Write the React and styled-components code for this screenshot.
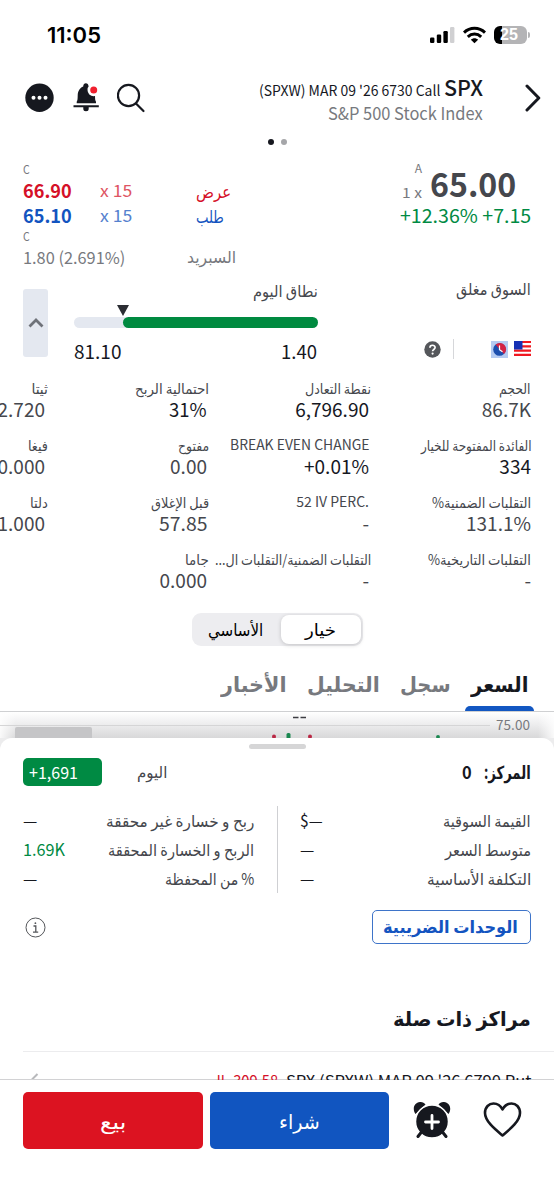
import React, { useLayoutEffect, useRef, useState } from 'react';
import styled, { createGlobalStyle } from 'styled-components';

const GlobalStyle = createGlobalStyle`
  * { box-sizing: border-box; }
  body { margin: 0; background: #fff; }
`;

const Screen = styled.div`
  width: 554px;
  height: 1200px;
  overflow: hidden;
  display: flex;
  flex-direction: column;
  background: #fff;
  color: #16181f;
  font-family: 'Noto Sans CJK SC', 'DejaVu Sans', sans-serif;
`;

const FitBox = styled.span`
  display: flex;
  flex: none;
  direction: ltr;
  justify-content: ${(p) => (p.$side === 'left' ? 'flex-start' : 'flex-end')};
  width: ${(p) => p.$w}px;
  height: ${(p) => p.$s * 1.4}px;
  line-height: ${(p) => p.$s * 1.4}px;
  font-size: ${(p) => p.$s}px;
  font-weight: ${(p) => p.$b || 400};
  color: ${(p) => p.$c || '#45474d'};
  white-space: nowrap;
  margin: ${(p) => p.$m || '0'};
  font-family: ${(p) => p.$f || 'inherit'};
`;

const FitInner = styled.span`
  flex: none;
  transform-origin: ${(p) => p.$side || 'right'} center;
`;

/* Text whose advance width is condensed or widened to the given column width. */
function Text({ w, s, b, c, m, f, side = 'right', rtl, children }) {
  const ref = useRef(null);
  const [scale, setScale] = useState(1);
  useLayoutEffect(() => {
    const natural = ref.current.offsetWidth;
    if (natural) setScale(w / natural);
  }, [w, s, children]);
  return (
    <FitBox $w={w} $s={s} $b={b} $c={c} $m={m} $f={f} $side={side}>
      <FitInner ref={ref} $side={side} dir={rtl ? 'rtl' : 'ltr'} style={{ transform: `scaleX(${scale})` }}>
        {children}
      </FitInner>
    </FitBox>
  );
}

const StatusBar = styled.div`
  flex: none;
  height: 70px;
  padding: 0 27px 0 47px;
  display: flex;
  align-items: center;
  justify-content: space-between;
`;
const StatusIcons = styled.div`
  display: flex;
  align-items: center;
  gap: 8px;
`;
const Battery = styled.div`
  position: relative;
  width: 33px;
  height: 18px;
  border-radius: 6px;
  background: linear-gradient(90deg, #000 8px, #b4b4b6 8px);
  color: #fff;
  font: 700 16px/18px 'Liberation Sans', sans-serif;
  padding-right: 3px;
  text-align: center;
  &::after {
    content: '';
    position: absolute;
    left: 34px;
    top: 6px;
    width: 2px;
    height: 6px;
    border-radius: 0 2px 2px 0;
    background: #b4b4b6;
  }
`;

const Header = styled.header`
  flex: none;
  height: 60px;
  padding: 0 13px 0 25px;
  display: flex;
  align-items: flex-start;
`;
const HeaderIcons = styled.div`
  display: flex;
  gap: 18px;
  padding-top: 13px;
  flex: 1;
`;
const Titles = styled.div`
  display: flex;
  flex-direction: column;
  align-items: flex-end;
  padding-top: 1px;
`;
const TitleLine = styled.div`
  display: flex;
  align-items: baseline;
  gap: 4px;
`;
const NextIcon = styled.svg`
  margin: 14px 0 0 42px;
`;

const Pager = styled.div`
  flex: none;
  height: 30px;
  padding-top: 9px;
  display: flex;
  justify-content: center;
  gap: 7px;
`;
const PagerDot = styled.i`
  width: 6px;
  height: 6px;
  border-radius: 50%;
  background: ${(p) => (p.$on ? '#16181f' : '#a5a6a9')};
`;

const Quote = styled.section`
  flex: none;
  height: 120px;
  padding: 0 23px;
  display: flex;
  justify-content: space-between;
`;
const BidAsk = styled.div`
  width: 213px;
  display: flex;
  flex-direction: column;
`;
const QuoteRow = styled.div`
  height: ${(p) => p.$h}px;
  display: flex;
  align-items: center;
`;
const Grow = styled.i`
  flex: 1;
`;
const LastPrice = styled.div`
  display: flex;
  flex-direction: column;
  align-items: flex-end;
`;
const PriceLine = styled.div`
  height: 42px;
  display: flex;
  align-items: center;
  gap: 8px;
  padding-right: 15px;
`;
const SizeStack = styled.div`
  display: flex;
  flex-direction: column;
  align-items: flex-end;
`;

const RangeSection = styled.section`
  flex: none;
  height: 98px;
  padding: 9px 23px 0;
  display: flex;
`;
const CollapseButton = styled.button`
  width: 25px;
  height: 68px;
  padding: 0;
  border: 0;
  border-radius: 3px;
  background: #e4e8f0;
  display: grid;
  place-items: center;
`;
const DayRange = styled.div`
  width: 244px;
  margin-left: 26px;
  display: flex;
  flex-direction: column;
  align-items: flex-end;
`;
const Marker = styled.svg`
  align-self: flex-start;
  margin: 1px 0 1px 43px;
`;
const Track = styled.div`
  width: 100%;
  height: 11px;
  border-radius: 6px;
  background: #e4e8f0;
  padding-left: 49px;
`;
const TrackFill = styled.div`
  height: 11px;
  border-radius: 6px;
  background: #008a40;
`;
const RangeValues = styled.div`
  width: 100%;
  display: flex;
  justify-content: space-between;
  padding-top: 10px;
`;
const MarketState = styled.div`
  flex: 1;
  display: flex;
  flex-direction: column;
  align-items: flex-end;
  justify-content: space-between;
  height: 70px;
`;
const StateIcons = styled.div`
  display: flex;
  align-items: center;
`;
const Rule = styled.i`
  width: 1px;
  height: 20px;
  background: #d6d7da;
  margin: 0 37px 0 12px;
`;

const Stats = styled.section`
  flex: none;
  height: 228px;
  display: grid;
  grid-template-columns: repeat(4, 162px);
  grid-auto-rows: 57px;
  direction: rtl;
  padding-right: 23px;
`;
const Stat = styled.div`
  display: flex;
  flex-direction: column;
  align-items: flex-start;
`;

const SegmentRow = styled.div`
  flex: none;
  height: 46px;
  padding: 7px 0 0 192px;
`;
const Segments = styled.div`
  width: 171px;
  height: 33px;
  border-radius: 9px;
  background: #ededf0;
  display: flex;
  padding: 2px;
`;
const Segment = styled.div`
  width: ${(p) => p.$w}px;
  border-radius: 8px;
  background: ${(p) => (p.$on ? '#fff' : 'transparent')};
  box-shadow: ${(p) => (p.$on ? '0 1px 4px rgba(0,0,0,.18)' : 'none')};
  display: flex;
  align-items: center;
  justify-content: center;
  padding-bottom: 2px;
`;

const Tabs = styled.nav`
  flex: none;
  height: 60px;
  direction: rtl;
  display: flex;
  gap: 8px;
  padding-right: 20px;
  border-bottom: 1px solid #cfd0d2;
`;
const Tab = styled.div`
  height: 59px;
  padding: 17px 6px 0;
  border-bottom: 5px solid transparent;
  position: relative;
  &::after {
    content: '';
    display: ${(p) => (p.$on ? 'block' : 'none')};
    position: absolute;
    left: 0;
    right: 0;
    bottom: -5px;
    height: 5px;
    border-radius: 5px 5px 0 0;
    background: #1257c2;
  }
`;

const ChartPeek = styled.div`
  flex: none;
  height: 26px;
  background:
    linear-gradient(90deg, rgba(255,255,255,.85), rgba(255,255,255,0) 16px, rgba(255,255,255,0) 538px, rgba(255,255,255,.85)),
    linear-gradient(#fff, #ededee 48%, #d8d8d9);
`;

const Sheet = styled.section`
  flex: none;
  height: 342px;
  background: #fff;
  border-radius: 12px 12px 0 0;
  display: flex;
  flex-direction: column;
  overflow: hidden;
`;
const SheetWrap = styled.div`
  flex: none;
  background: linear-gradient(#ececed, #ececed) 0 0 / 100% 20px no-repeat;
`;
const Handle = styled.i`
  flex: none;
  width: 57px;
  height: 5px;
  border-radius: 3px;
  background: #d6d6d7;
  margin: 6px 0 0 249px;
`;
const PositionHead = styled.div`
  flex: none;
  height: 28px;
  margin: 9px 23px 0;
  display: flex;
  align-items: center;
`;
const PnlBadge = styled.div`
  width: 79px;
  height: 28px;
  border-radius: 5px;
  background: #008a43;
  padding-left: 6px;
  display: flex;
  align-items: center;
`;
const Details = styled.div`
  flex: none;
  height: 88px;
  margin: 20px 23px 0;
  display: flex;
`;
const DetailColumn = styled.div`
  flex: none;
  width: ${(p) => p.$w}px;
`;
const DetailRow = styled.div`
  height: 29px;
  padding-bottom: 1px;
  display: flex;
  align-items: center;
  justify-content: space-between;
`;
const DetailRule = styled.i`
  width: 1px;
  height: 87px;
  background: #cfd0d3;
  margin: 0 22px 0 23px;
`;
const Actions = styled.div`
  flex: none;
  height: 34px;
  margin: 16px 23px 0 25px;
  display: flex;
  align-items: center;
  justify-content: space-between;
`;
const TaxLots = styled.button`
  width: 159px;
  height: 34px;
  padding: 0 12px 2px 0;
  border: 1px solid #3e74c9;
  border-radius: 5px;
  background: #fff;
  display: flex;
  align-items: center;
  justify-content: flex-end;
  font-family: inherit;
`;
const Related = styled.div`
  flex: none;
  height: 107px;
  padding: 60px 23px 0;
  display: flex;
  justify-content: flex-end;
`;
const RelatedRow = styled.div`
  flex: none;
  height: 40px;
  margin-left: 23px;
  padding: 17px 23px 0 4px;
  border-top: 1px solid #ececee;
  display: flex;
  align-items: flex-start;
`;

const Footer = styled.footer`
  flex: none;
  height: 121px;
  margin-top: -1px;
  border-top: 1px solid #d2d2d4;
  padding: 12px 32px 0 23px;
  display: flex;
  align-items: flex-start;
  background: #fff;
`;
const TradeButton = styled.button`
  width: ${(p) => p.$w}px;
  height: 57px;
  padding: 0;
  border: 0;
  border-radius: 5px;
  background: ${(p) => p.$bg};
  margin-right: ${(p) => p.$gap}px;
  display: flex;
  align-items: center;
  justify-content: center;
  font-family: inherit;
`;
const Icon = styled.svg`
  flex: none;
  margin: ${(p) => p.$m};
`;

const dark = '#16181f';
const grey = '#77797e';
const green = '#008a43';
const red = '#d51028';
const blue = '#1354c0';

const stats = [
  ['الحجم', 32, '86.7K', 49],
  ['نقطة التعادل', 66, '6,796.90', 74, dark],
  ['احتمالية الربح', 74, '31%', 38, dark],
  ['ثيتا', 17, '2.720', 47],
  ['الفائدة المفتوحة للخيار', 111, '334', 32, dark],
  ['BREAK EVEN CHANGE', 139, '+0.01%', 65, dark],
  ['مفتوح', 31, '0.00', 37],
  ['فيغا', 20, '0.000', 47],
  ['التقلبات الضمنية%', 99, '131.1%', 65],
  ['52 IV PERC.', 73, '-', 7],
  ['قبل الإغلاق', 58, '57.85', 48],
  ['دلتا', 18, '1.000', 47],
  ['التقلبات التاريخية%', 103, '-', 7],
  ['التقلبات الضمنية/التقلبات ال...', 156, '-', 7],
  ['جاما', 24, '0.000', 47],
];

const labelInset = [0, -2, -2, -3];

export default function App() {
  return (
    <Screen>
      <GlobalStyle />
      <StatusBar>
        <Text w={54} s={22} b={600} c="#000" f="Inter, sans-serif" side="left">11:05</Text>
        <StatusIcons>
          <svg width="25" height="18" viewBox="0 0 25 18">
            <rect x="0" y="11.5" width="4.4" height="5.5" rx="1.2" />
            <rect x="6.8" y="8.5" width="4.4" height="8.5" rx="1.2" />
            <rect x="13.4" y="5" width="4.4" height="12" rx="1.2" />
            <rect x="20" y="1" width="4.4" height="16" rx="1.2" fill="#d0d0d2" />
          </svg>
          <svg width="23" height="18" viewBox="0 0 23 18" fill="none" stroke="#000" strokeWidth="3">
            <path d="M1 6.600C7 .9 16 .9 22 6.600" />
            <path d="M4.800 10.800c3.900-3.600 9.500-3.600 13.400 0" />
            <path d="M7.900 13.700c2.100-2 5.100-2 7.200 0L11.500 17.300z" fill="#000" stroke="none" />
          </svg>
          <Battery>25</Battery>
        </StatusIcons>
      </StatusBar>

      <Header>
        <HeaderIcons>
          <svg width="29" height="29" viewBox="0 0 29 29">
            <circle cx="14.500" cy="14.700" r="14.200" fill={dark} />
            <g fill="#fff"><circle cx="8.500" cy="14.700" r="2" /><circle cx="14.500" cy="14.700" r="2" /><circle cx="20.500" cy="14.700" r="2" /></g>
          </svg>
          <svg width="27" height="29" viewBox="0 0 27 29" fill={dark}>
            <path d="M4.700 20.300v-1.500c1-1.600.9-3.300 1-6.300.1-4.800 2.300-7.700 5.500-9C11.300 1.300 12.400.2 13.900.2s2.500 1 2.700 3.300C20.500 4.800 22.900 7.700 23 12.500c.1 3 0 4.700 1 6.300v1.500z" />
            <path d="M1.500 22.200h25.300v2H1.500zM11.300 24h5.400v1.800a2.700 2.500 0 0 1-5.400 0z" />
            <circle cx="21.700" cy="7" r="6.200" fill="#fff" />
            <circle cx="21.700" cy="7" r="3.500" fill="#f0202e" />
          </svg>
          <svg width="29" height="30" viewBox="0 0 29 30" fill="none" stroke={dark} strokeWidth="2.200" strokeLinecap="round">
            <circle cx="11.500" cy="12.500" r="10.600" />
            <path d="M19 20.500l7.500 7.500" />
          </svg>
        </HeaderIcons>
        <Titles>
          <TitleLine>
            <Text w={181} s={14.5} c={dark}>{"(SPXW) MAR 09 '26 6730 Call"}</Text>
            <Text w={39} s={22} b={500} c={dark}>SPX</Text>
          </TitleLine>
          <Text w={155} s={17.5} c={grey} m="-1px 0 0">{'S&P 500 Stock Index'}</Text>
        </Titles>
        <NextIcon width="16" height="28" viewBox="0 0 16 28" fill="none" stroke={dark} strokeWidth="3" strokeLinecap="round" strokeLinejoin="round">
          <path d="M2 2l11.800 12L2 26" />
        </NextIcon>
      </Header>
      <Pager><PagerDot $on /><PagerDot /></Pager>

      <Quote>
        <BidAsk>
          <QuoteRow $h={18}><Text w={7} s={12} c={grey} side="left">C</Text></QuoteRow>
          <QuoteRow $h={25}>
            <Text w={49} s={18.5} b={700} c={red} side="left">66.90</Text>
            <Text w={32} s={16.5} c="#de5563" side="left" m="0 0 0 28px">x 15</Text>
            <Grow /><Text w={35} s={17} c={red} rtl m="0 5px 0 0">عرض</Text>
          </QuoteRow>
          <QuoteRow $h={26}>
            <Text w={49} s={18.5} b={700} c={blue} side="left">65.10</Text>
            <Text w={32} s={16.5} c="#5581ce" side="left" m="0 0 0 28px">x 15</Text>
            <Grow /><Text w={28} s={17} c={blue} rtl m="0 12px 0 0">طلب</Text>
          </QuoteRow>
          <QuoteRow $h={14}><Text w={7} s={12} c={grey} side="left">C</Text></QuoteRow>
          <QuoteRow $h={29}>
            <Text w={102} s={16.5} c={grey} side="left">1.80 (2.691%)</Text>
            <Grow /><Text w={49} s={16} c={grey} rtl m="-2px 0 0">السبريد</Text>
          </QuoteRow>
        </BidAsk>
        <LastPrice>
          <PriceLine>
            <SizeStack>
              <Text w={7} s={12} c={grey}>A</Text>
              <Text w={20} s={14} c={grey} m="6px 0 0">1 x</Text>
            </SizeStack>
            <Text w={86} s={32.5} b={700} c="#45474d" m="3px 0 0">65.00</Text>
          </PriceLine>
          <Text w={131} s={19} c={green}>+12.36% +7.15</Text>
        </LastPrice>
      </Quote>

      <RangeSection>
        <CollapseButton>
          <svg width="16" height="10" viewBox="0 0 16 10" fill="none" stroke="#6f7279" strokeWidth="2.800"><path d="M1.500 8.500L8 2l6.500 6.500" /></svg>
        </CollapseButton>
        <DayRange>
          <Text w={65} s={16} rtl m="-10px 0 3px">نطاق اليوم</Text>
          <Marker width="12" height="11" viewBox="0 0 12 11"><path d="M0 0h12L6 11z" fill="#2b2d33" /></Marker>
          <Track><TrackFill /></Track>
          <RangeValues>
            <Text w={47} s={19} c={dark} side="left">81.10</Text>
            <Text w={36} s={19} c={dark} m="0 1px 0 0">1.40</Text>
          </RangeValues>
        </DayRange>
        <MarketState>
          <Text w={75} s={16} rtl m="-12px 0 0">السوق مغلق</Text>
          <StateIcons>
            <svg width="17" height="17" viewBox="0 0 17 17">
              <circle cx="8.500" cy="8.500" r="8.200" fill="#55575b" />
              <path d="M5.900 6.800c0-3.400 5.200-3.300 5.200-.2 0 1.900-2.500 1.900-2.500 3.700" fill="none" stroke="#fff" strokeWidth="1.700" />
              <circle cx="8.600" cy="12.600" r="1.100" fill="#fff" />
            </svg>
            <Rule />
            <svg width="17" height="17" viewBox="0 0 17 17">
              <path d="M0 0h17v17H0z" fill="#b5cbf2" />
              <circle cx="8.500" cy="8.500" r="6.300" fill="#1c4fae" />
              <path d="M4.500 3.600a6.300 6.300 0 1 1 8.500 9.300z" fill="#d32244" />
              <path d="M8.500 4.500v4.200l3 2" fill="none" stroke="#fff" strokeWidth="1.200" />
            </svg>
            <Icon $m="-2px 0 0 6px" width="17" height="15" viewBox="0 0 17 15">
              <path d="M0 0h17v15H0z" fill="#fff" />
              <path d="M0 1h17M0 5.300h17M0 9.600h17M0 13.900h17" stroke="#f01820" strokeWidth="2.200" />
              <path d="M0 0h8.500v8.500H0z" fill="#1631b4" />
            </Icon>
          </StateIcons>
        </MarketState>
      </RangeSection>

      <Stats>
        {stats.map(([label, lw, value, vw, color], i) => {
          const latin = /^[A-Z0-9]/.test(label);
          return (
            <Stat key={label}>
              <Text w={lw} s={14} rtl={!latin} m={`${latin ? 0 : 1}px ${latin ? 0 : labelInset[i % 4]}px ${latin ? 1 : 0}px 0`}>{label}</Text>
              <Text w={vw} s={19} c={color} m="-3px 0 0">{value}</Text>
            </Stat>
          );
        })}
      </Stats>

      <SegmentRow>
        <Segments>
          <Segment $w={87}><Text w={55} s={17} c="#000" rtl m="0 4px 0 0">الأساسي</Text></Segment>
          <Segment $w={80} $on><Text w={31} s={17} c="#000" rtl>خيار</Text></Segment>
        </Segments>
      </SegmentRow>

      <Tabs>
        <Tab $on><Text w={57} s={21} b={700} c={dark} rtl>السعر</Text></Tab>
        <Tab><Text w={51} s={21} b={700} c={grey} rtl>سجل</Text></Tab>
        <Tab><Text w={73} s={21} b={700} c={grey} rtl>التحليل</Text></Tab>
        <Tab><Text w={66} s={21} b={700} c={grey} rtl>الأخبار</Text></Tab>
      </Tabs>

      <ChartPeek>
        <svg width="554" height="26" viewBox="0 0 554 26" fontFamily="'Noto Sans CJK SC', sans-serif">
          <path d="M0 13.500h490" stroke="#d5d5d6" />
          <path d="M15 26V17q0-2 2-2h73q2 0 2 2v9z" fill="#c5c5c7" />
          <path d="M293 5.500h5.500M300.500 5.500h5.500" stroke="#3c3d42" strokeWidth="1.400" />
          <g fill="#b92845"><circle cx="274" cy="24.500" r="2" /><circle cx="310" cy="24.500" r="2" /></g>
          <rect x="286.500" y="21" width="4" height="6" rx="1.500" fill="#1a8750" />
          <circle cx="438" cy="24.800" r="1.900" fill="#1a8750" />
          <text x="496" y="17.500" fontSize="13.500" textLength="34" fill={grey}>75.00</text>
        </svg>
      </ChartPeek>

      <SheetWrap>
        <Sheet>
          <Handle />
          <PositionHead>
            <PnlBadge><Text w={49} s={17} c="#fff" side="left" m="0 0 1px">+1,691</Text></PnlBadge>
            <Text w={30} s={16} rtl m="0 0 2px 35px">اليوم</Text>
            <Grow />
            <Text w={10} s={18} b={700} c={dark} m="0 12px 0 0">0</Text>
            <Text w={47} s={18} b={700} c={dark} rtl>المركز:</Text>
          </PositionHead>
          <Details>
            <DetailColumn $w={231}>
              <DetailRow><Text w={14} s={16} c={dark} side="left">—</Text><Text w={148} s={16} rtl>ربح و خسارة غير محققة</Text></DetailRow>
              <DetailRow><Text w={42} s={17} c={green} side="left">1.69K</Text><Text w={146} s={16} rtl>الربح و الخسارة المحققة</Text></DetailRow>
              <DetailRow><Text w={14} s={16} c={dark} side="left">—</Text><Text w={89} s={16} rtl>% من المحفظة</Text></DetailRow>
            </DetailColumn>
            <DetailRule />
            <DetailColumn $w={231}>
              <DetailRow><Text w={23} s={17} c={dark} side="left">$—</Text><Text w={88} s={16} rtl>القيمة السوقية</Text></DetailRow>
              <DetailRow><Text w={14} s={16} c={dark} side="left">—</Text><Text w={86} s={16} rtl>متوسط السعر</Text></DetailRow>
              <DetailRow><Text w={14} s={16} c={dark} side="left">—</Text><Text w={104} s={16} rtl>التكلفة الأساسية</Text></DetailRow>
            </DetailColumn>
          </Details>
          <Actions>
            <svg width="21" height="21" viewBox="0 0 21 21" fill="none" stroke="#55575b">
              <circle cx="10.500" cy="10.500" r="9.500" />
              <path d="M8.500 9h2.300v6M8 15.200h5.200" strokeWidth="1.300" />
              <circle cx="10.400" cy="6.200" r=".9" fill="#55575b" stroke="none" />
            </svg>
            <TaxLots><Text w={135} s={17} b={700} c={blue} rtl>الوحدات الضريبية</Text></TaxLots>
          </Actions>
          <Related><Text w={138} s={20} b={700} c={dark} rtl>مراكز ذات صلة</Text></Related>
          <RelatedRow>
            <Icon $m="2px 0 0" width="12" height="18" viewBox="0 0 12 18" fill="none" stroke="#b8b9bc" strokeWidth="2"><path d="M10.500 3L3.500 10l7 7" /></Icon>
            <Grow />
            <Text w={68} s={16} c={red} rtl m="0 8px 0 0">{'\u200e-309.58 ال'}</Text>
            <Text w={245} s={16} c={dark}>{"SPX (SPXW) MAR 09 '26 6790 Put"}</Text>
          </RelatedRow>
        </Sheet>
      </SheetWrap>

      <Footer>
        <TradeButton $w={180} $bg="#dc1321" $gap={7}><Text w={26} s={20} c="#fff" rtl>بيع</Text></TradeButton>
        <TradeButton $w={179} $bg="#1155c0" $gap={24}><Text w={41} s={20} c="#fff" rtl>شراء</Text></TradeButton>
        <Icon $m="9px 0 0" width="38" height="37" viewBox="0 0 38 37" fill={dark}>
          <path d="M2.500 13C-1 8 1 1.500 7 1c2.500-.2 4.300.8 5.500 2.500zM35.500 13C39 8 37 1.500 31 1c-2.500-.2-4.300.8-5.500 2.500z" />
          <circle cx="19" cy="20.500" r="16.500" stroke="#fff" strokeWidth="1.500" />
          <path d="M8.500 31l-3.500 4.500M29.500 31l3.500 4.500" stroke={dark} strokeWidth="3" strokeLinecap="round" />
          <path d="M19 14.500v13M12.500 21h13" stroke="#fff" strokeWidth="2.800" strokeLinecap="round" />
        </Icon>
        <Icon $m="9px 0 0 32px" width="39" height="37" viewBox="0 0 39 37" fill="none" stroke={dark} strokeWidth="2.600" strokeLinejoin="round">
          <path d="M19.500 34.500C13 29 2 20.500 2 12 2 6 6 2.500 10.500 2.500c4 0 7 2 9 6 2-4 5-6 9-6C33 2.500 37 6 37 12c0 8.500-11 17-17.500 22.500z" />
        </Icon>
      </Footer>
    </Screen>
  );
}
